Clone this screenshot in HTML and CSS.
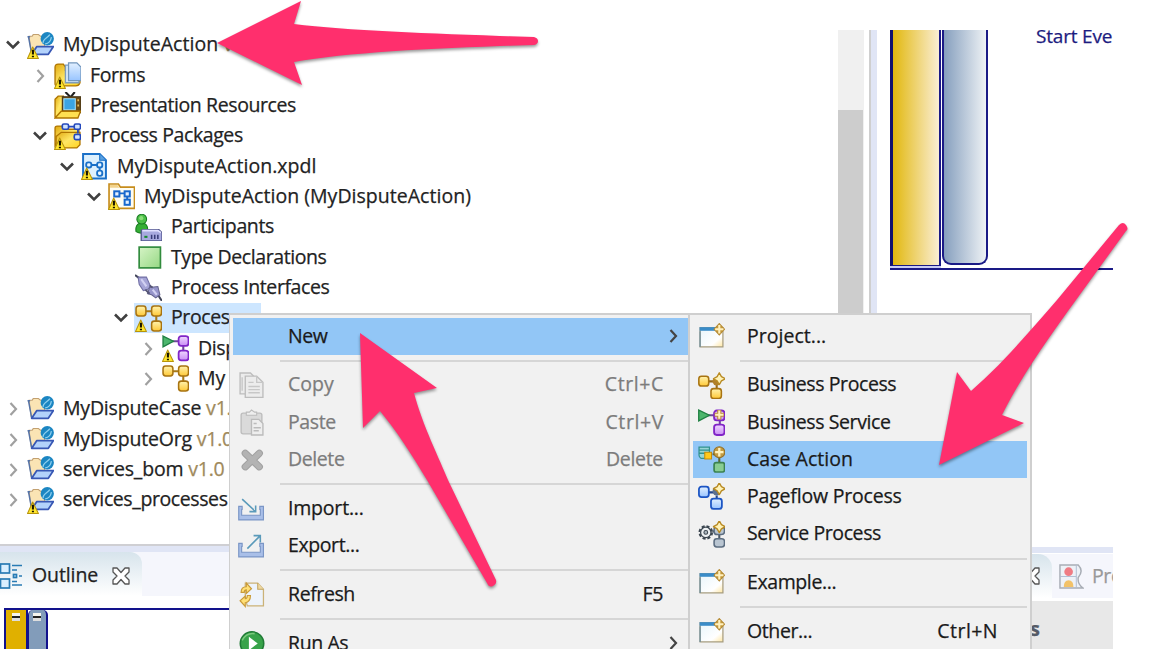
FILE: index.html
```html
<!DOCTYPE html>
<html lang="en">
<head>
<meta charset="utf-8">
<title>Project Explorer</title>
<link rel="stylesheet" href="styles.css">
</head>
<body>
<svg class="defs" width="0" height="0">
  <defs>
    <linearGradient id="gold" x1="0" y1="0" x2="0" y2="1"><stop offset="0" stop-color="#fff3b0"/><stop offset="1" stop-color="#ffc936"/></linearGradient>
    <linearGradient id="folder" x1="0" y1="0" x2="1" y2="1"><stop offset="0" stop-color="#e0a810"/><stop offset=".5" stop-color="#ffe765"/><stop offset="1" stop-color="#ffd21f"/></linearGradient>
    <linearGradient id="blue" x1="0" y1="0" x2="0" y2="1"><stop offset="0" stop-color="#e2f0ff"/><stop offset="1" stop-color="#98c4ff"/></linearGradient>
    <linearGradient id="purple" x1="0" y1="0" x2="0" y2="1"><stop offset="0" stop-color="#f0d8ff"/><stop offset="1" stop-color="#c98cf5"/></linearGradient>
    <linearGradient id="green" x1="0" y1="0" x2="1" y2="1"><stop offset="0" stop-color="#d6f4c6"/><stop offset="1" stop-color="#96d884"/></linearGradient>
    <linearGradient id="win" x1="0" y1="0" x2="1" y2="1"><stop offset="0" stop-color="#e8f5fb"/><stop offset=".7" stop-color="#fff"/><stop offset="1" stop-color="#ffe6a0"/></linearGradient>

    <symbol id="warn" viewBox="0 0 26 26"><path d="M5.500 14.500 11 25.500H.500Z" fill="#ffe62e" stroke="#b8940a" stroke-width="1" stroke-linejoin="round"/><path d="M5.700 17v4.700M5.700 22.800v1.600" stroke="#181400" stroke-width="2"/></symbol>
    <symbol id="star" viewBox="0 0 12 12"><path d="M6 .700 7.900 4.100 11.300 6 7.900 7.900 6 11.300 4.100 7.900 .700 6 4.100 4.100Z" fill="#fff3b8" stroke="#b88a22" stroke-width="1.200" stroke-linejoin="round"/></symbol>
    <symbol id="project" viewBox="0 0 26 26"><path d="M2 4H5L6 2.500H11L13 4H17V14L8 20H4Z" fill="#fae4b4" stroke="#c2a070" stroke-width="1"/><path d="M.500 4.500H3M1.500 5 4.500 21" stroke="#5573a8" stroke-width="1.400"/><path d="M9.500 14H25.500L20.500 21.500H4.500Z" fill="#b3d2fb" stroke="#3857b4" stroke-width="1.700" stroke-linejoin="round"/><circle cx="19.500" cy="6.500" r="6.400" fill="#1c86c2"/><path d="M15.500 11C15 6 20 6 22 2.500M17.500 11.500C22 11 23 8 23.500 5" fill="none" stroke="#8fd0ee" stroke-width="1.200"/></symbol>
    <symbol id="forms" viewBox="0 0 26 26"><path d="M1 5Q1 2 4 2H9L11 5V8H25V20Q24 23 21 23H3Q1 23 1 21Z" fill="url(#folder)" stroke="#b07600" stroke-width="1.300"/><path d="M11 3H20L24 7V20H11Z" fill="#d7eafa" stroke="#7d9cbd" stroke-width="1.300"/><path d="M14 .800H22L26 5V18H14Z" fill="url(#blue)" stroke="#7296bd" stroke-width="1.200"/></symbol>
    <symbol id="tv" viewBox="0 0 26 26"><path d="M1 7 4 4H9V24H1Z" fill="url(#folder)" stroke="#b07600" stroke-width="1.300"/><path d="M11 0 16 5 20 0" stroke="#222" stroke-width="2" fill="none"/><path d="M8 4.500H26V20H8Z" fill="#6b4b16" stroke="#42351c"/><path d="M9.500 6.500H20.500V17H9.500Z" fill="#3ba4e4" stroke="#a2e2ff"/><path d="M23.300 7v2M23.300 12v2" stroke="#e8bb5a" stroke-width="1.600"/><path d="M1 25 7 18.500H25.500L23 25Z" fill="#ffe052" stroke="#b07600" stroke-width="1.300"/></symbol>
    <symbol id="packages" viewBox="0 0 26 26"><path d="M1 5Q1 3 3 3H8L10 6H24V10H8L1 22Z" fill="url(#folder)" stroke="#b07600" stroke-width="1.300"/><path d="M2 24V13L7 9H25V21L22 24Z" fill="url(#folder)" stroke="#b07600" stroke-width="1.300"/><path d="M14 3.500H20M23 6V10" stroke="#2549bc" stroke-width="1.600"/><g fill="#cfe3ff" stroke="#2549bc" stroke-width="1.600"><rect x="8" y="1" width="6" height="5" rx="1.500"/><rect x="19.500" y="1" width="6" height="5" rx="1.500"/><rect x="19.500" y="11" width="6" height="5" rx="1.500"/></g></symbol>
    <symbol id="xpdl" viewBox="0 0 26 26"><path d="M2 1H18L24 7V24.500H2Z" fill="#ddf0fd" stroke="#1a70c8" stroke-width="1.900"/><path d="M18 1V7H24" fill="#5aa0e0" stroke="#1a70c8"/><g fill="#e9f6ff" stroke="#1a70c8" stroke-width="1.800"><path d="M10 11.500H16M18 14V18"/><rect x="5" y="9" width="5" height="5" rx="2"/><rect x="15.500" y="9" width="5" height="5" rx="2"/><rect x="15.500" y="17" width="5" height="5" rx="2"/></g></symbol>
    <symbol id="package" viewBox="0 0 26 26"><path d="M1 24.500V1H10L12 4H25.500V24.500Z" fill="#fffdf2" stroke="#c78d1c" stroke-width="1.600"/><path d="M2 2H9L11 4.500H2Z" fill="#f3d38b"/><g fill="#e4f1ff" stroke="#1868cc" stroke-width="1.900"><path d="M11 10H17M18.500 12V17"/><rect x="6" y="8" width="5" height="5"/><rect x="16" y="8" width="5" height="5"/><rect x="16" y="16" width="5" height="5"/></g></symbol>
    <symbol id="participants" viewBox="0 0 26 26"><path d="M4 9Q0 11 1 17Q6 20 12 17Q13 11 9 9Z" fill="#35ae35" stroke="#177b20"/><circle cx="6.500" cy="5" r="4.700" fill="#4cc048" stroke="#177b20"/><circle cx="6" cy="4" r="2" fill="#8bdd79"/><path d="M7 15H23L26 18V26H6V16Z" fill="#a7a9df" stroke="#54588f" stroke-width="1.300"/><path d="M7 16H22L25 18" stroke="#e1e1ff" stroke-width="1.500" fill="none"/><path d="M9 22h3" stroke="#168b2d" stroke-width="2"/><path d="M16 20v4M19 20v4M22 20v4" stroke="#373b78" stroke-width="1.500"/></symbol>
    <symbol id="type" viewBox="0 0 26 26"><rect x="4" y="3" width="20.500" height="20" fill="url(#green)" stroke="#318b3d" stroke-width="1.600"/></symbol>
    <symbol id="plug" viewBox="0 0 26 26"><path d="M0 1 4 4M22 20 26 26" stroke="#43465a" stroke-width="2"/><path d="M3 3 11 3 15 12 12 15 8 16 4 10Z" fill="#a5a4d6" stroke="#716fa4"/><path d="M14 13 22 12 24 20 20 23 16 20 12 19Z" fill="#9695ca" stroke="#65648f"/><path d="M10 15 14 19M14 11 17 13" stroke="#555575" stroke-width="1.800"/><path d="M6 5 11 12M17 15 21 20" stroke="#d2d1f2" stroke-width="2"/></symbol>
    <symbol id="proc" viewBox="0 0 26 26"><path d="M10 6H16M20.500 10V17" stroke="#a87a18" stroke-width="2"/><g fill="url(#gold)" stroke="#a87412" stroke-width="1.500"><rect x="1" y="1" width="9.500" height="9.500" rx="2.500"/><rect x="16" y="1" width="9.500" height="9.500" rx="2.500"/><rect x="16" y="15.500" width="9.500" height="9.500" rx="2.500"/></g></symbol>
    <symbol id="service" viewBox="0 0 26 26"><path d="M10 6H16M20.500 10V16" stroke="#70469b" stroke-width="2"/><path d="M1 1 11 6 1 11.500Z" fill="#4cb66c" stroke="#208043" stroke-width="1.300"/><g fill="url(#purple)" stroke="#8126c7" stroke-width="1.700"><rect x="16" y="1" width="9.500" height="9.500" rx="2.500"/><rect x="16" y="15" width="9.500" height="9.500" rx="2.500"/></g></symbol>
    <symbol id="window" viewBox="0 0 26 26"><rect x="2" y="4.500" width="22" height="18.500" fill="url(#win)" stroke="#a79d7f" stroke-width="1.200"/><path d="M1.500 4H21V7.500H1.500Z" fill="#3a8cc8"/><path d="M2 8V23" stroke="#718f9e" stroke-width="1.300"/><path d="M20.500 0.500 25.500 6 20.500 11.500 15.500 6Z" fill="#c59a3c" stroke="#b48932"/><path d="M20.500 2V10M16.500 6H24.500" stroke="#fff0bd" stroke-width="2"/></symbol>
    <symbol id="newproc" viewBox="0 0 26 26"><path d="M10 9H16M18 12V17" stroke="#94691a" stroke-width="2"/><g fill="url(#gold)" stroke="#a87412" stroke-width="1.500"><rect x="0.800" y="4" width="9.500" height="9.500" rx="2.500"/><rect x="12.500" y="16" width="10" height="9.500" rx="2.500"/></g><circle cx="18" cy="9" r="4" fill="#b18028"/><use href="#star" x="14" y="0" width="13" height="13"/></symbol>
    <symbol id="newserv" viewBox="0 0 26 26"><path d="M9 6H16M21 10V15" stroke="#70469b" stroke-width="2"/><path d="M.700 1 11 6 .700 11.500Z" fill="#4cb66c" stroke="#208043" stroke-width="1.300"/><g fill="url(#purple)" stroke="#8126c7" stroke-width="1.800"><rect x="15.500" y="1.500" width="10" height="9.500" rx="2.500"/><rect x="15.500" y="15" width="10" height="10" rx="2.500"/></g><path d="M20.500 1V10M16 5.500H25" stroke="#b98a38" stroke-width="4"/><path d="M20.500 1.500V9.500M16.500 5.500H24.500" stroke="#fff2bd" stroke-width="2"/></symbol>
    <symbol id="newcase" viewBox="0 0 26 26"><path d="M1 1H11V12H3Q1 11 1 9Z" fill="#98d6d5" stroke="#31918f" stroke-width="1.200"/><path d="M1 4H11M1 7H10" stroke="#31918f" stroke-width="1.300"/><path d="M6.500 6H13V12.500H6.500Z" fill="#ffc91b" stroke="#c38b0c"/><path d="M14 8H17M20.500 10V16" stroke="#5e6735" stroke-width="2"/><circle cx="20.500" cy="6" r="5.300" fill="#c49b40" stroke="#957126"/><path d="M20.500 2V10M16.500 6H24.500" stroke="#fff2bd" stroke-width="2.200"/><rect x="15.500" y="16" width="10" height="9" rx="2" fill="#88cd92" stroke="#3b8251" stroke-width="1.600"/></symbol>
    <symbol id="newpage" viewBox="0 0 26 26"><path d="M10 9H16M18 12V17" stroke="#22448c" stroke-width="2"/><g fill="url(#blue)" stroke="#1c55c4" stroke-width="1.700"><rect x=".900" y="3.500" width="9.500" height="10" rx="2.500"/><rect x="12.500" y="15" width="10.500" height="10" rx="2.500"/></g><circle cx="18" cy="8" r="4" fill="#5d7190"/><use href="#star" x="14" y="-1" width="13" height="13"/></symbol>
    <symbol id="newsvc" viewBox="0 0 26 26"><circle cx="7.500" cy="11" r="6" fill="#edf0f2" stroke="#3c4650" stroke-width="2" stroke-dasharray="2.900 1.810"/><circle cx="7.500" cy="11" r="5" fill="#edf0f2" stroke="#3c4650" stroke-width="1.200"/><circle cx="7.500" cy="11" r="1.800" fill="#aeb8c0" stroke="#3c4650"/><path d="M14 10H19M20.500 13V18" stroke="#4b5764" stroke-width="2"/><g fill="#b9c5d1" stroke="#5c6d80" stroke-width="1.500"><rect x="15.500" y="5" width="10" height="8" rx="3"/><rect x="15.500" y="17" width="10" height="8" rx="2.500"/></g><use href="#star" x="14" y="-1" width="13" height="13"/></symbol>
    <symbol id="copy" viewBox="0 0 26 26"><g fill="#ececec" stroke="#bdbdbd" stroke-width="1.300"><path d="M2 1H12L15 4V21H2Z"/><path d="M7 4H18L24 10V24.500H7Z"/></g><path d="M18 4V10H24M10 10H15M10 14H21M10 17H21M10 20H21M4 5V18" fill="none" stroke="#c7c7c7" stroke-width="1.300"/></symbol>
    <symbol id="paste" viewBox="0 0 26 26"><rect x="3" y="4" width="20" height="20" rx="2" fill="#dadada" stroke="#bdbdbd" stroke-width="1.300"/><path d="M8 6V3H11L13 1 16 3H18V6Z" fill="#eee" stroke="#bcbcbc"/><path d="M13 10H20L24 14V25H13Z" fill="#eee" stroke="#bbb" stroke-width="1.300"/><path d="M15 14H18M15 18H22M15 21H20" stroke="#bbb" stroke-width="1.400"/></symbol>
    <symbol id="delete" viewBox="0 0 26 26"><path d="M7 7 20.500 20M20.500 7 7 20" stroke="#a1a1a1" stroke-width="7" stroke-linecap="round"/><path d="M7 7 20.500 20M20.500 7 7 20" stroke="#b3b3b3" stroke-width="5" stroke-linecap="round"/></symbol>
    <symbol id="import" viewBox="0 0 26 26"><path d="M.700 11H4V14H3.500V19.500H21.500V14H21V11H24.500V24H.700Z" fill="#a9bfe8" stroke="#7b96c6" stroke-width="1.100"/><path d="M4 4 16.500 15.500M17 10V16H11" fill="none" stroke="#5a9aba" stroke-width="1.500"/></symbol>
    <symbol id="export" viewBox="0 0 26 26"><path d="M.700 11H4V14H3.500V19.500H21.500V14H21V11H24.500V24H.700Z" fill="#a9bfe8" stroke="#7b96c6" stroke-width="1.100"/><path d="M9 16 21 4M15 3.500H21.500V10" fill="none" stroke="#5a9aba" stroke-width="1.500"/></symbol>
    <symbol id="refresh" viewBox="0 0 26 26"><path d="M7 2H19L24.500 8V24H9L7 17Z" fill="#edf3fb" stroke="#cbb277" stroke-width="1.200"/><path d="M19 2V8H24.500" fill="#efd9a2" stroke="#c1a35e"/><path d="M3 11Q3 5.500 8 5.500V2L13 7.500 8 12V8.500Q6 8.500 6 11ZM12 14Q12 20 7 21V24.500L2 19 7 14.500V17Q9 17 9 14Z" fill="#ffe077" stroke="#c99a38" stroke-width="1.100"/></symbol>
    <symbol id="run" viewBox="0 0 26 26"><circle cx="13.500" cy="13" r="11.300" fill="#38a34a" stroke="#207b36" stroke-width="1.500"/><path d="M4 10Q8 2.500 16 3.500" stroke="#7bc97d" stroke-width="1.500" fill="none"/><path d="M10.500 6.500 19 13 10.500 19.500Z" fill="#fff"/></symbol>
    <symbol id="close" viewBox="0 0 20 20"><path d="M2 2H6L10 6.500 14 2H18V6L14 10 18 14V18H14L10 13.500 6 18H2V14L6 10 2 6Z" fill="#fff" stroke="#555" stroke-width="1.300" stroke-linejoin="round"/></symbol>
    <symbol id="outline" viewBox="0 0 24 26"><g fill="#d9efff" stroke="#287bb4" stroke-width="1.700"><rect x="1.500" y="1" width="9" height="9"/><rect x="1.500" y="16" width="9" height="9"/><rect x="14.500" y="11.500" width="3" height="3"/></g><path d="M13 2.500H23M13 7H18M20 13H23M13 18.500H18M13 22H23" stroke="#287bb4" stroke-width="1.500"/></symbol>
    <symbol id="down" viewBox="0 0 16 16"><path d="M2 4.500 8 10.500 14 4.500" fill="none" stroke="#404040" stroke-width="2.600"/></symbol>
    <symbol id="right" viewBox="0 0 16 16"><path d="M5.500 2 11 8 5.500 14" fill="none" stroke="currentColor" stroke-width="2.200"/></symbol>
  </defs>
</svg>

<div class="screen">
  <div class="workbench">
    <div class="left">
      <div class="explorer">
        <div class="tree">
          <div class="row l0"><svg class="tw"><use href="#down"/></svg><svg class="ic"><use href="#project"/><use href="#warn"/></svg><span class="lbl wide">MyDisputeAction <i class="ver">v1.0</i></span></div>
          <div class="row l1"><svg class="tw shut"><use href="#right"/></svg><svg class="ic"><use href="#forms"/><use href="#warn"/></svg><span class="lbl">Forms</span></div>
          <div class="row l1"><span class="tw"></span><svg class="ic"><use href="#tv"/></svg><span class="lbl">Presentation Resources</span></div>
          <div class="row l1"><svg class="tw"><use href="#down"/></svg><svg class="ic"><use href="#packages"/><use href="#warn"/></svg><span class="lbl">Process Packages</span></div>
          <div class="row l2"><svg class="tw"><use href="#down"/></svg><svg class="ic"><use href="#xpdl"/><use href="#warn"/></svg><span class="lbl wide">MyDisputeAction.xpdl</span></div>
          <div class="row l3"><svg class="tw"><use href="#down"/></svg><svg class="ic"><use href="#package"/><use href="#warn"/></svg><span class="lbl wide">MyDisputeAction (MyDisputeAction)</span></div>
          <div class="row l4"><span class="tw"></span><svg class="ic"><use href="#participants"/></svg><span class="lbl">Participants</span></div>
          <div class="row l4"><span class="tw"></span><svg class="ic"><use href="#type"/></svg><span class="lbl">Type Declarations</span></div>
          <div class="row l4"><span class="tw"></span><svg class="ic"><use href="#plug"/></svg><span class="lbl">Process Interfaces</span></div>
          <div class="row l4"><svg class="tw"><use href="#down"/></svg><div class="sel"><svg class="ic"><use href="#proc"/><use href="#warn"/></svg><span class="lbl">Processes</span></div></div>
          <div class="row l5"><svg class="tw shut"><use href="#right"/></svg><svg class="ic"><use href="#service"/><use href="#warn"/></svg><span class="lbl">Disp</span></div>
          <div class="row l5"><svg class="tw shut"><use href="#right"/></svg><svg class="ic"><use href="#proc"/></svg><span class="lbl wide">My</span></div>
          <div class="row l0"><svg class="tw shut"><use href="#right"/></svg><svg class="ic"><use href="#project"/></svg><span class="lbl mid">MyDisputeCase <i class="ver">v1.0</i></span></div>
          <div class="row l0"><svg class="tw shut"><use href="#right"/></svg><svg class="ic"><use href="#project"/></svg><span class="lbl mid">MyDisputeOrg <i class="ver">v1.0</i></span></div>
          <div class="row l0"><svg class="tw shut"><use href="#right"/></svg><svg class="ic"><use href="#project"/></svg><span class="lbl mid">services_bom <i class="ver">v1.0</i></span></div>
          <div class="row l0"><svg class="tw shut"><use href="#right"/></svg><svg class="ic"><use href="#project"/><use href="#warn"/></svg><span class="lbl">services_processes</span></div>
        </div>
        <div class="scroll"><div class="thumb"></div></div>
      </div>
      <div class="outline">
        <div class="tabs"><div class="tab"><svg class="oic"><use href="#outline"/></svg><span class="olbl">Outline</span><svg class="x"><use href="#close"/></svg></div></div>
        <div class="preview"><div class="mini gold"><b></b></div><div class="mini steel"><b></b></div></div>
      </div>
    </div>
    <div class="right">
      <div class="canvas">
        <div class="pool"><div class="head"></div><div class="lane"></div><div class="flow"><span class="start">Start Eve</span></div></div>
      </div>
      <div class="props">
        <div class="ptabs">
          <div class="ptab"><svg class="x"><use href="#close"/></svg></div>
          <svg class="pic" viewBox="0 0 26 26"><path d="M1 1H20Q26 7 20 14Q19 21 25 25H1Z" fill="#edf1f7" stroke="#a8adb5" stroke-width="1.500"/><path d="M1 13H18M18 1V25" stroke="#b0bdd2"/><circle cx="10" cy="8" r="4.500" fill="#ef7b83"/><path d="M5 24Q5 17 10 17T15 24Z" fill="#f2c269"/></svg>
          <span class="plbl">Pro</span>
        </div>
        <div class="pbody">s</div>
      </div>
    </div>
  </div>

  <div class="menu main">
    <div class="item on"><span class="mi"></span><span class="mt">New</span><svg class="go"><use href="#right"/></svg></div>
    <div class="sep"></div>
    <div class="item off"><svg class="mi"><use href="#copy"/></svg><span class="mt wide">Copy</span><span class="key">Ctrl+C</span></div>
    <div class="item off"><svg class="mi"><use href="#paste"/></svg><span class="mt">Paste</span><span class="key">Ctrl+V</span></div>
    <div class="item off"><svg class="mi"><use href="#delete"/></svg><span class="mt">Delete</span><span class="key word">Delete</span></div>
    <div class="sep"></div>
    <div class="item"><svg class="mi"><use href="#import"/></svg><span class="mt mid">Import...</span></div>
    <div class="item"><svg class="mi"><use href="#export"/></svg><span class="mt">Export...</span></div>
    <div class="sep"></div>
    <div class="item"><svg class="mi"><use href="#refresh"/></svg><span class="mt">Refresh</span><span class="key word">F5</span></div>
    <div class="sep"></div>
    <div class="item"><svg class="mi"><use href="#run"/></svg><span class="mt">Run As</span><svg class="go"><use href="#right"/></svg></div>
  </div>

  <div class="menu sub">
    <div class="item"><svg class="mi"><use href="#window"/></svg><span class="mt wide">Project...</span></div>
    <div class="sep"></div>
    <div class="item"><svg class="mi"><use href="#newproc"/></svg><span class="mt">Business Process</span></div>
    <div class="item"><svg class="mi"><use href="#newserv"/></svg><span class="mt">Business Service</span></div>
    <div class="item on"><svg class="mi"><use href="#newcase"/></svg><span class="mt wide">Case Action</span></div>
    <div class="item"><svg class="mi"><use href="#newpage"/></svg><span class="mt mid">Pageflow Process</span></div>
    <div class="item"><svg class="mi"><use href="#newsvc"/></svg><span class="mt">Service Process</span></div>
    <div class="sep"></div>
    <div class="item"><svg class="mi"><use href="#window"/></svg><span class="mt">Example...</span></div>
    <div class="sep"></div>
    <div class="item"><svg class="mi"><use href="#window"/></svg><span class="mt">Other...</span><span class="key">Ctrl+N</span></div>
  </div>

  <svg class="arrows" viewBox="0 0 1168 650">
    <path d="M217 43 301 1 294 24C350 31 440 34 534 37Q538 38 538 41T534 45C440 48 350 52 294 62L302 85Z"/>
    <path d="M360 333 437 388 414 393C422 424 440 460 448 480L496 580Q497 584 493 586T487 583L427 480C412 455 396 430 380 411L363 428Z"/>
    <path d="M939 465 957 372 971 391C1002 364 1030 331 1057 300L1119 225Q1123 221 1126 225T1126 231L1076 300C1050 336 1020 378 1002 415L1024 423Z"/>
  </svg>
</div>
</body>
</html>
```
FILE: styles.css
```css
body { margin: 0; background: #fff; }
.defs { display: block; position: absolute; }
.screen {
  position: relative;
  width: 1168px;
  height: 649px;
  overflow: hidden;
  font: 19.5px/30px "Open Sans", "Noto Sans", sans-serif;
  letter-spacing: -0.4px;
  -webkit-text-stroke: 0.25px currentColor;
  color: #222;
}
.workbench { display: flex; width: 1113px; height: 619px; padding-top: 30px; }
.left { width: 877px; display: flex; flex-direction: column; }
.explorer { display: flex; height: 514px; border-bottom: 2px solid #cfcfd3; }
.tree { flex: 1; }
.row { display: flex; align-items: center; height: 30.35px; white-space: nowrap; }
.l1 { padding-left: 27px; }
.l2 { padding-left: 54px; }
.l3 { padding-left: 81px; }
.l4 { padding-left: 108px; }
.l5 { padding-left: 135px; }
.tw { width: 16px; height: 16px; margin: 0 6px 0 5px; flex: none; }
.shut { color: #a0a0a0; }
.ic { width: 27px; height: 27px; flex: none; }
.lbl { margin: -2px 0 0 9px; }
.wide { letter-spacing: 0.03px; }
.mid { letter-spacing: -0.2px; }
.ver { font-style: normal; color: #a08a5c; }
.sel { display: flex; align-items: center; width: 126px; height: 30px; margin-left: -1px; padding-left: 1px; background: #cde6ff; }
.scroll { width: 26px; padding-top: 80px; margin-right: 5px; background: #f0f0f0; }
.thumb { height: 434px; width: 25px; background: #cdcdcd; }
.explorer::after { content: ""; width: 6px; background: #e0e5f5; border-left: 2px solid #cfcfcf; }

.outline { flex: 1; display: flex; flex-direction: column; border-top: 6px solid #e0e5f5; }
.tabs { display: flex; height: 44px; background: #f5f6fc; }
.tab { display: flex; align-items: center; width: 142px; padding-top: 3px; height: 41px; border-radius: 0 12px 0 0; background: linear-gradient(#d7e4ec, #fff); }
.oic { width: 24px; height: 26px; margin-left: -1px; }
.olbl { margin: -1px 0 0 9px; width: 79px; letter-spacing: -.1px; }
.x { width: 20px; height: 20px; }
.preview { display: flex; height: 39px; margin: 12px 0 0 4px; border-top: 2px solid #12128c; border-left: 2px solid #12128c; }
.mini { width: 20px; border-right: 2px solid #12128c; padding-top: 3px; }
.mini b { display: block; width: 8px; height: 8px; margin-left: 6px; background: linear-gradient(#f4f4ee 3px, #222 3px 5px, #ddd 5px); }
.mini.gold { background: #e0b000; }
.mini.steel { width: 17px; border-left: 1px solid #12128c; border-radius: 5px 5px 0 0; background: #829cba; }
.mini.steel b { margin-left: 4px; }

.right { width: 236px; display: flex; flex-direction: column; }
.canvas { height: 517px; padding-left: 13px; }
.pool { display: flex; width: 223px; height: 238px; border-bottom: 2px solid #1a1a86; }
.head { width: 46px; height: 235px; border-left: 3px solid #12126e; border-right: 2px solid #1a1a86; border-bottom: 1px solid #1a1a86; background: linear-gradient(90deg, #e2b80e, #faeed4); box-shadow: 0 2px #c9cdf5; }
.lane { width: 42px; height: 233px; margin-left: 1px; border: 2px solid #1a1a86; border-top: 0; border-radius: 0 0 9px 9px; background: linear-gradient(90deg, #869fbe, #eef2f5); }
.flow { flex: 1; }
.start { display: block; margin: -9px 0 0 48px; font-size: 19px; letter-spacing: -.2px; color: #1c1c80; white-space: nowrap; }
.props { flex: 1; border-top: 6px solid #e0e5f5; }
.ptabs { display: flex; align-items: center; height: 44px; margin-top: 1px; background: #f5f6fc; overflow: hidden; }
.ptab { display: flex; flex: none; align-items: center; justify-content: flex-end; width: 175px; height: 44px; border-radius: 0 14px 0 0; background: linear-gradient(#d7e4ec, #fff); }
.ptab .x { margin-right: 11px; }
.pic { width: 25px; height: 27px; flex: none; margin-left: 7px; }
.plbl { margin-left: 8px; color: #999; }
.pbody { height: 48px; margin-top: 3px; padding-left: 153px; background: #e8e8e8; font-weight: bold; font-size: 20px; line-height: 55px; color: #555a66; }

.menu { position: absolute; top: 313px; box-sizing: border-box; height: 350px; border: 2px solid #cfcfcf; padding-top: 3px; background: #f1f1f1; }
.main { left: 229px; width: 461px; padding-left: 3px; border-left-width: 1.5px; }
.sub { left: 688px; width: 344px; padding: 3px 3px 0; }
.item { display: flex; align-items: center; height: 37.15px; color: #1a1a1a; }
.item.on { background: #92c6f6; }
.item.off { color: #7c7c7c; }
.mi { width: 27px; height: 27px; margin-left: 5px; flex: none; }
.mt { flex: 1; margin: -2px 0 0 22px; }
.main .mt { margin-left: 23px; }
.key { margin: -2px 24px 0 0; letter-spacing: .6px; }
.key.word { margin-right: 25px; letter-spacing: -.3px; }
.sub .key { margin-right: 29px; letter-spacing: .45px; }
.go { width: 16px; height: 16px; margin: -2px 7px 0 0; color: #444; }
.sep { height: 11.75px; margin-left: 47px; background: linear-gradient(#d6d6d6, #d6d6d6) 0 5px / 100% 2px no-repeat; }

.arrows { position: absolute; left: 0; top: 0; width: 1168px; height: 650px; fill: #ff2f6d; filter: drop-shadow(0 2px 1.500px rgba(0,0,0,.4)); }
```
